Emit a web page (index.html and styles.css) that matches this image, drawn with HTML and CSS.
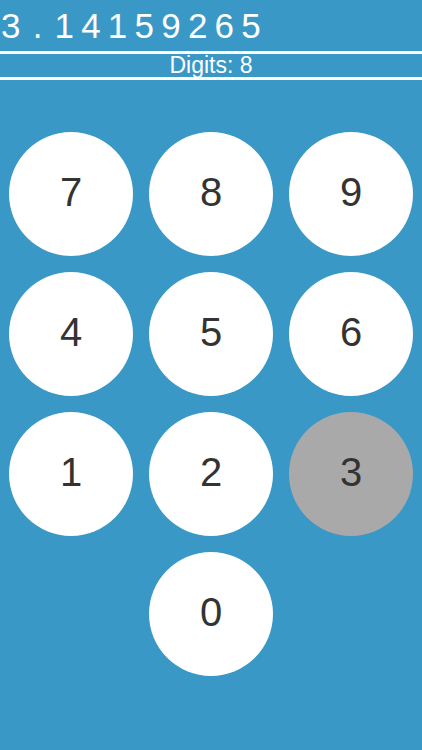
FILE: index.html
```html
<!DOCTYPE html>
<html>
<head>
<meta charset="utf-8">
<link rel="stylesheet" href="styles.css">
</head>
<body>
<div class="app">
  <div class="number"><span class="ch">3</span><span class="ch">.</span><span class="ch">1</span><span class="ch">4</span><span class="ch">1</span><span class="ch">5</span><span class="ch">9</span><span class="ch">2</span><span class="ch">6</span><span class="ch">5</span></div>
  <div class="digits">Digits: 8</div>
  <div class="pad">
    <button class="key">7</button>
    <button class="key">8</button>
    <button class="key">9</button>
    <button class="key">4</button>
    <button class="key">5</button>
    <button class="key">6</button>
    <button class="key">1</button>
    <button class="key">2</button>
    <button class="key key-active">3</button>
    <button class="key key-zero">0</button>
  </div>
</div>
</body>
</html>
```
FILE: styles.css
```css
html, body {
  margin: 0;
  padding: 0;
}
body {
  background: #3a98c6;
  font-family: "Liberation Sans", Arial, sans-serif;
  color: #ffffff;
  width: 422px;
  height: 750px;
  overflow: hidden;
}
.app {
  display: flex;
  flex-direction: column;
}
.number {
  height: 51px;
  line-height: 52px;
  font-size: 35px;
  white-space: nowrap;
  margin-left: -2.5px;
  border-bottom: 3px solid #ffffff;
}
.ch {
  display: inline-block;
  width: 26.7px;
  text-align: center;
}
.digits {
  height: 23px;
  line-height: 22px;
  font-size: 23px;
  text-align: center;
  border-bottom: 3px solid #ffffff;
}
.pad {
  display: grid;
  grid-template-columns: repeat(3, 124px);
  grid-auto-rows: 124px;
  gap: 16px;
  padding: 52px 9px 0 9px;
}
.key {
  border: none;
  margin: 0;
  padding: 0;
  border-radius: 50%;
  background: #ffffff;
  color: #333333;
  font-family: "Liberation Sans", Arial, sans-serif;
  font-size: 40px;
  display: flex;
  align-items: center;
  justify-content: center;
  padding-bottom: 4px;
}
.key-active {
  background: #a9a9a9;
}
.key-zero {
  grid-column: 2;
}
```
